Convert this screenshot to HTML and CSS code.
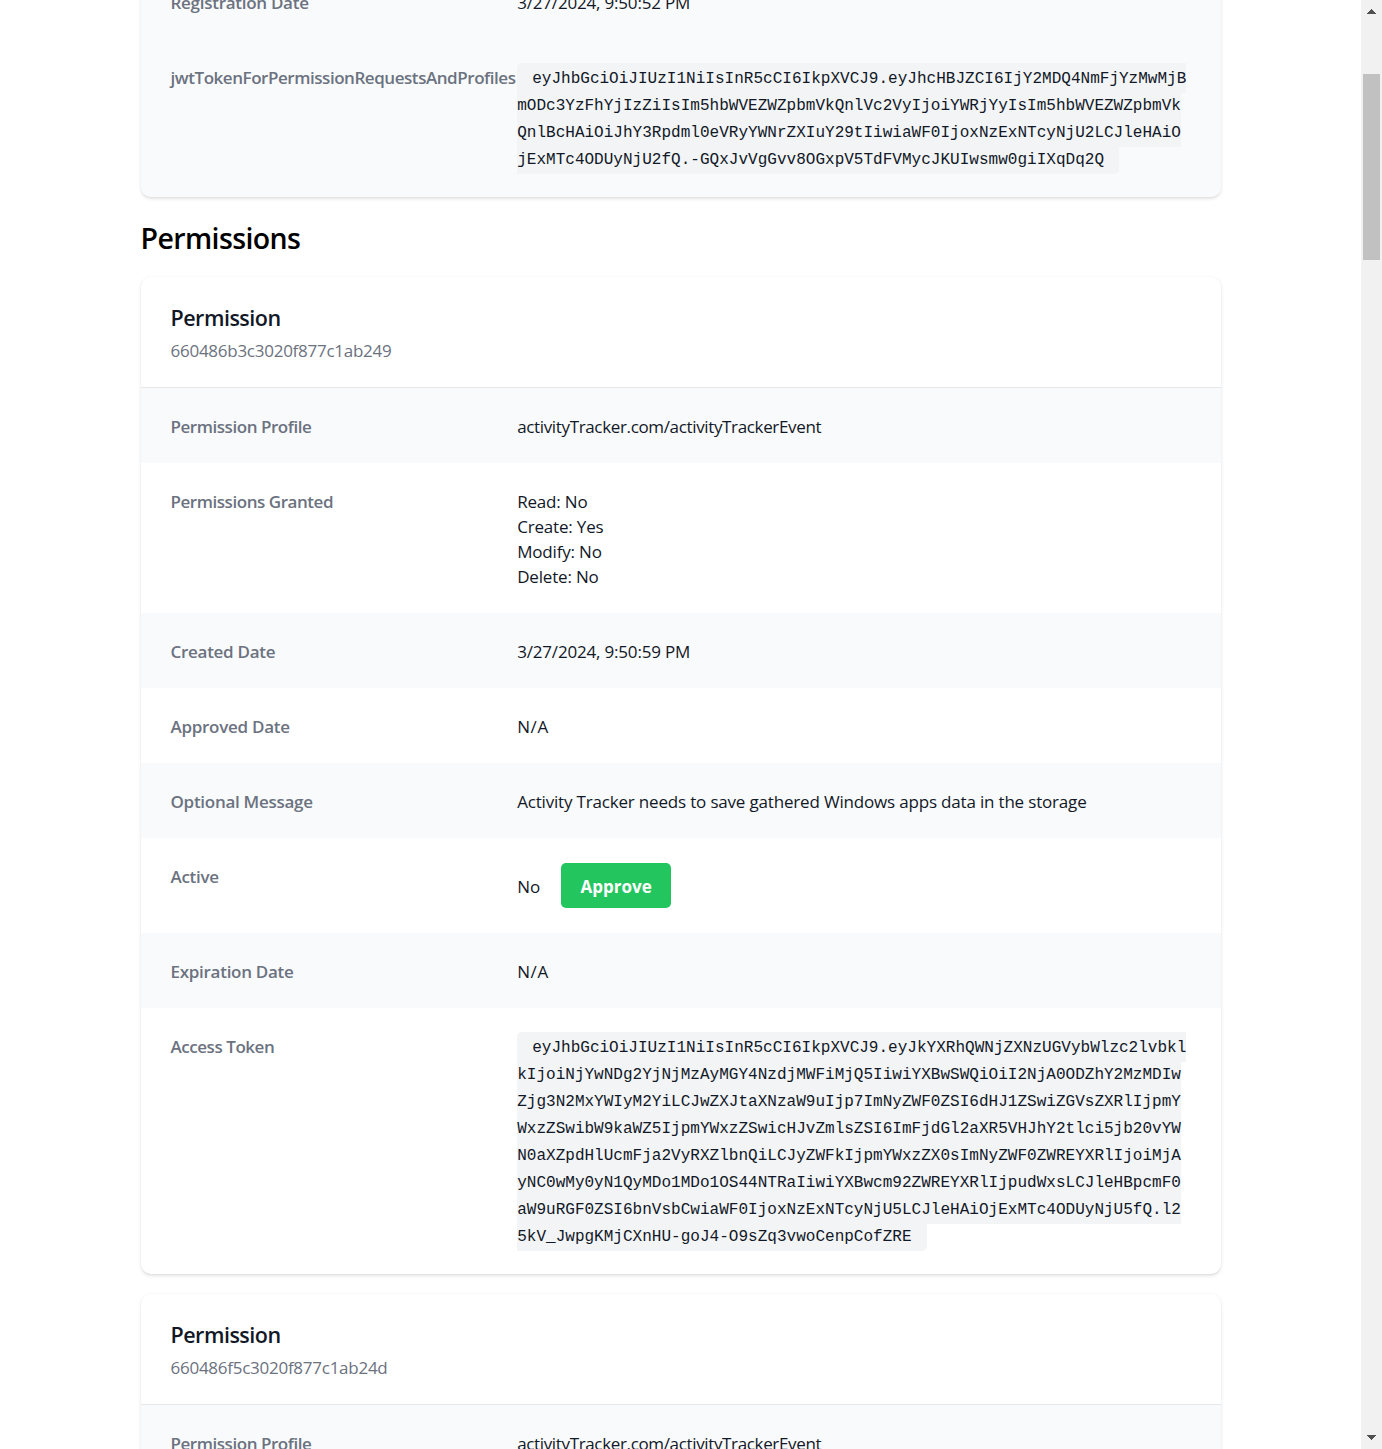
FILE: index.html
```html
<!DOCTYPE html>
<html lang="en">
<head>
<meta charset="utf-8">
<title>Permissions</title>
<link rel="stylesheet" href="styles.css">
</head>
<body>
<div class="viewport">
<main class="page">
  <section class="card card-app">
    <dl class="rows">
      <div class="row shaded"><dt>Registration Date</dt><dd>3/27/2024, 9:50:52 PM</dd></div>
      <div class="row shaded"><dt class="tight">jwtTokenForPermissionRequestsAndProfiles</dt><dd class="token"><code>eyJhbGciOiJIUzI1NiIsInR5cCI6IkpXVCJ9.eyJhcHBJZCI6IjY2MDQ4NmFjYzMwMjBmODc3YzFhYjIzZiIsIm5hbWVEZWZpbmVkQnlVc2VyIjoiYWRjYyIsIm5hbWVEZWZpbmVkQnlBcHAiOiJhY3Rpdml0eVRyYWNrZXIuY29tIiwiaWF0IjoxNzExNTcyNjU2LCJleHAiOjExMTc4ODUyNjU2fQ.-GQxJvVgGvv8OGxpV5TdFVMycJKUIwsmw0giIXqDq2Q</code></dd></div>
    </dl>
  </section>

  <h2 class="title">Permissions</h2>

  <section class="card">
    <header class="card-head">
      <h3>Permission</h3>
      <p>660486b3c3020f877c1ab249</p>
    </header>
    <dl class="rows">
      <div class="row shaded"><dt class="tight">Permission Profile</dt><dd class="domain">activityTracker.com/activityTrackerEvent</dd></div>
      <div class="row"><dt class="tight">Permissions Granted</dt><dd>Read: No<br>Create: Yes<br>Modify: No<br>Delete: No</dd></div>
      <div class="row shaded"><dt>Created Date</dt><dd>3/27/2024, 9:50:59 PM</dd></div>
      <div class="row"><dt>Approved Date</dt><dd class="empty">N/A</dd></div>
      <div class="row shaded"><dt>Optional Message</dt><dd>Activity Tracker needs to save gathered Windows apps data in the storage</dd></div>
      <div class="row"><dt>Active</dt><dd class="active"><span>No</span><button class="approve" type="button">Approve</button></dd></div>
      <div class="row shaded"><dt>Expiration Date</dt><dd class="empty">N/A</dd></div>
      <div class="row"><dt class="tight">Access Token</dt><dd class="token"><code>eyJhbGciOiJIUzI1NiIsInR5cCI6IkpXVCJ9.eyJkYXRhQWNjZXNzUGVybWlzc2lvbklkIjoiNjYwNDg2YjNjMzAyMGY4NzdjMWFiMjQ5IiwiYXBwSWQiOiI2NjA0ODZhY2MzMDIwZjg3N2MxYWIyM2YiLCJwZXJtaXNzaW9uIjp7ImNyZWF0ZSI6dHJ1ZSwiZGVsZXRlIjpmYWxzZSwibW9kaWZ5IjpmYWxzZSwicHJvZmlsZSI6ImFjdGl2aXR5VHJhY2tlci5jb20vYWN0aXZpdHlUcmFja2VyRXZlbnQiLCJyZWFkIjpmYWxzZX0sImNyZWF0ZWREYXRlIjoiMjAyNC0wMy0yN1QyMDo1MDo1OS44NTRaIiwiYXBwcm92ZWREYXRlIjpudWxsLCJleHBpcmF0aW9uRGF0ZSI6bnVsbCwiaWF0IjoxNzExNTcyNjU5LCJleHAiOjExMTc4ODUyNjU5fQ.l25kV_JwpgKMjCXnHU-goJ4-O9sZq3vwoCenpCofZRE</code></dd></div>
    </dl>
  </section>

  <section class="card">
    <header class="card-head">
      <h3>Permission</h3>
      <p>660486f5c3020f877c1ab24d</p>
    </header>
    <dl class="rows">
      <div class="row shaded"><dt class="tight">Permission Profile</dt><dd class="domain">activityTracker.com/activityTrackerEvent</dd></div>
    </dl>
  </section>
</main>
<aside class="scrollbar">
  <svg width="9" height="5" viewBox="0 0 9 5" shape-rendering="crispEdges"><path d="M4 0h1v1h1v1h1v1h1v1h1v1H0V4h1V3h1V2h1V1h1z" fill="#505050"/></svg>
  <div class="thumb"></div>
  <svg class="down" width="9" height="5" viewBox="0 0 9 5" shape-rendering="crispEdges"><path d="M0 0h9v1H8v1H7v1H6v1H5v1H4V4H3V3H2V2H1V1H0z" fill="#505050"/></svg>
</aside>
</div>
</body>
</html>
```
FILE: styles.css
```css
* { box-sizing: border-box; }
body { margin: 0; overflow: hidden; background: #fff; font-family: "Segoe UI", "Open Sans", sans-serif; font-size: 17px; line-height: 25px; color: #111827; }
h2, h3, p, dl, dd { margin: 0; }

.viewport { display: flex; height: 1449px; overflow: hidden; }
.page { flex: 1; overflow: hidden; display: flow-root; }

.card { width: 1080px; margin: 0 auto 20px; background: #fff; border-radius: 10px; overflow: hidden; box-shadow: 0 1.25px 3.75px rgba(0,0,0,.1), 0 1.25px 2.5px -1.25px rgba(0,0,0,.1); }
.card-app { margin-top: -36px; border-top-left-radius: 0; border-top-right-radius: 0; }

.title { width: 1080px; margin: 21px auto 19px; color: #000; font-size: 28.5px; line-height: 40px; font-weight: 600; letter-spacing: -.6px; }

.card-head { padding: 26px 30px 24px; }
.card-head h3 { font-size: 21.5px; line-height: 30px; font-weight: 600; letter-spacing: -.5px; }
.card-head p { margin-top: 5px; color: #6b7280; letter-spacing: -.26px; }
.card-head + .rows { border-top: 1px solid #e5e7eb; }

.row { display: grid; grid-template-columns: repeat(3, minmax(0, 1fr)); column-gap: 20px; padding: 26px 30px 24px; }
.shaded { background: #f9fafb; }
dt { color: #6b7280; font-weight: 600; white-space: nowrap; letter-spacing: -.28px; }
.tight { letter-spacing: -.45px; }
dd { grid-column: span 2; letter-spacing: -.18px; }
.domain { letter-spacing: -.35px; }
.empty { letter-spacing: .6px; }

.token { margin: 1px 0 -1px; line-height: 27px; letter-spacing: 0; word-break: break-all; font-family: Consolas, "Liberation Mono", monospace; font-size: 16.04px; }
.token code { font: inherit; padding: 7px 15px 5px; border-radius: 5px; background: #f3f4f6; }

.active { display: flex; align-items: center; gap: 21px; margin: -1px 0 1px; letter-spacing: 0; }
.active span { padding-top: 2px; }
.approve { width: 110px; height: 45px; padding: 2px 0 0; border: 0; border-radius: 5px; background: #22c55e; color: #fff; font: inherit; font-weight: 700; }

.scrollbar { width: 21px; padding: 9px 2px; background: #f1f1f1; display: flex; flex-direction: column; align-items: center; }
.thumb { width: 17px; height: 186px; margin-top: 60px; background: #c1c1c1; }
.down { margin-top: auto; }
```
